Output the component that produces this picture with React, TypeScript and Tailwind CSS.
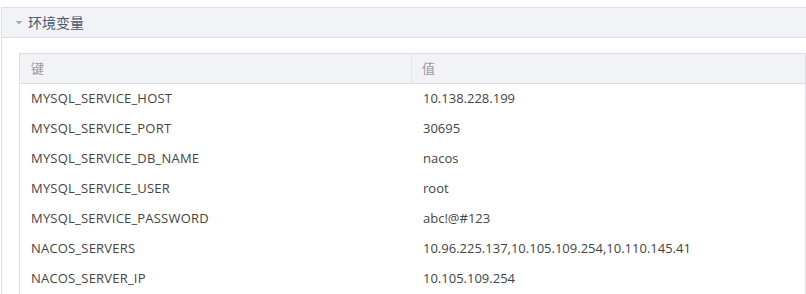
import React from "react";

const rows: [string, string][] = [
  ["MYSQL_SERVICE_HOST", "10.138.228.199"],
  ["MYSQL_SERVICE_PORT", "30695"],
  ["MYSQL_SERVICE_DB_NAME", "nacos"],
  ["MYSQL_SERVICE_USER", "root"],
  ["MYSQL_SERVICE_PASSWORD", "abc!@#123"],
  ["NACOS_SERVERS", "10.96.225.137,10.105.109.254,10.110.145.41"],
  ["NACOS_SERVER_IP", "10.105.109.254"],
];

export default function App() {
  return (
    <div
      className="w-[806px] h-[294px] bg-white overflow-hidden pt-[7px] pl-[1px]"
      style={{ fontFamily: '"Open Sans", "Noto Sans CJK SC", sans-serif' }}
    >
      <div className="border-l border-t border-[#dcdee3] h-[300px]">
        <div className="h-[30px] bg-[#f2f3f7] border-b border-[#dcdee3] flex items-center pl-[13px]">
          <svg width="8" height="6" viewBox="0 0 8 6" className="mr-[5px] mt-[1px]">
            <path d="M0.5 1 L7.5 1 L4 4.5 Z" fill="#a8acb4" />
          </svg>
          <span className="text-[14px] text-[#4a5a70]">环境变量</span>
        </div>
        <div className="pl-[17px] pt-[15px]">
          <div className="border border-[#dcdee3] w-[787px]">
            <div className="flex h-[30px] bg-[#f2f3f7] border-b border-[#dcdee3] text-[13px] text-[#999999]">
              <div className="w-[392px] border-r border-[#e6e7eb] flex items-center pl-[11px]">键</div>
              <div className="flex-1 flex items-center pl-[10px]">值</div>
            </div>
            {rows.map(([k, v]) => (
              <div key={k} className="flex h-[30px] text-[13px] text-[#444444]">
                <div className="w-[392px] flex items-center pl-[11px] tracking-[0.2px]">{k}</div>
                <div className="flex-1 flex items-center pl-[11px]">{v}</div>
              </div>
            ))}
          </div>
        </div>
      </div>
    </div>
  );
}
